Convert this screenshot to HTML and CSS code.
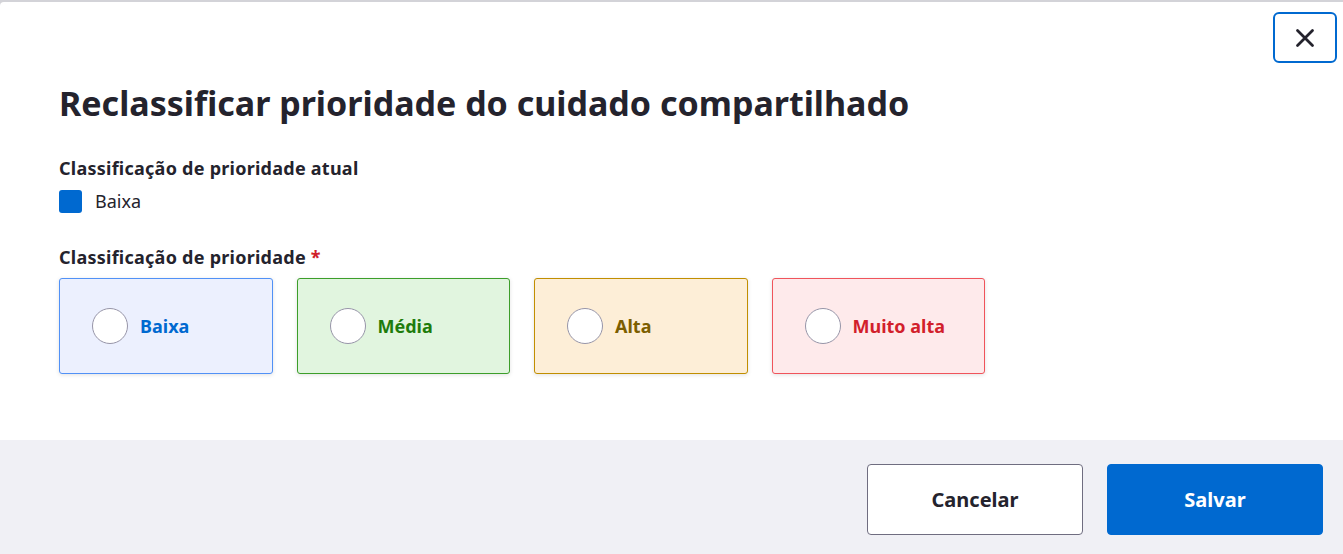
FILE: index.html
```html
<!DOCTYPE html>
<html lang="pt-BR">
<head>
<meta charset="utf-8">
<title>Reclassificar prioridade</title>
<link rel="stylesheet" href="styles.css">
</head>
<body>
<div class="modal">
  <div class="modal-body">
    <div class="close-row">
      <button class="close-btn" aria-label="Fechar">
        <svg width="20" height="20" viewBox="0 0 20 20"><path d="M2.5 2.5 L17.5 17.5 M17.5 2.5 L2.5 17.5" stroke="#24232d" stroke-width="2.8" stroke-linecap="round" fill="none"/></svg>
      </button>
    </div>
    <h1 class="title">Reclassificar prioridade do cuidado compartilhado</h1>
    <div class="label">Classificação de prioridade atual</div>
    <div class="current">
      <span class="swatch"></span>
      <span class="current-text">Baixa</span>
    </div>
    <div class="label label-req">Classificação de prioridade <span class="req">*</span></div>
    <div class="options">
      <label class="opt opt-baixa"><span class="radio"></span><span class="opt-text">Baixa</span></label>
      <label class="opt opt-media"><span class="radio"></span><span class="opt-text">Média</span></label>
      <label class="opt opt-alta"><span class="radio"></span><span class="opt-text">Alta</span></label>
      <label class="opt opt-muito"><span class="radio"></span><span class="opt-text">Muito alta</span></label>
    </div>
  </div>
  <div class="footer">
    <button class="btn btn-cancel">Cancelar</button>
    <button class="btn btn-save">Salvar</button>
  </div>
</div>
</body>
</html>
```

FILE: styles.css
```css
* { box-sizing: border-box; }
html, body { margin: 0; padding: 0; }
body {
  background: #d3d3d8;
  font-family: "Noto Sans", "Open Sans", sans-serif;
  color: #24232d;
  padding-top: 2px;
}
.modal {
  background: #ffffff;
  border-top-left-radius: 4px;
  height: 552px;
  display: flex;
  flex-direction: column;
}
.modal-body {
  flex: 1;
  padding: 10px 6px 0 59px;
}
.close-row {
  display: flex;
  justify-content: flex-end;
}
.close-btn {
  width: 64px;
  height: 51px;
  border: 2px solid #0069d0;
  border-radius: 6px;
  background: #fff;
  display: flex;
  align-items: center;
  justify-content: center;
  padding: 0;
}
.title {
  margin: 17px 0 0 0;
  font-size: 34px;
  font-weight: 700;
  line-height: 46px;
  letter-spacing: 0;
}
.label {
  margin-top: 30px;
  font-size: 18px;
  font-weight: 700;
  line-height: 24px;
  letter-spacing: 0.25px;
}
.current {
  display: flex;
  align-items: center;
  gap: 13px;
  margin-top: 9px;
  height: 24px;
}
.swatch {
  width: 23px;
  height: 23px;
  border-radius: 3px;
  background: #0069d0;
}
.current-text {
  font-size: 18px;
  line-height: 24px;
}
.label-req { margin-top: 32px; }
.req { color: #d0202a; }
.options {
  display: grid;
  grid-template-columns: repeat(4, 213.5px);
  gap: 24px;
  margin-top: 9px;
}
.opt {
  height: 96px;
  border: 1px solid;
  border-radius: 3px;
  display: flex;
  align-items: center;
  padding-left: 32px;
  gap: 12px;
  box-shadow: 0 1px 4px rgba(0,0,0,0.12);
}
.radio {
  width: 36px;
  height: 36px;
  border-radius: 50%;
  border: 1px solid #9795a8;
  background: #fff;
}
.opt-text {
  font-size: 18px;
  font-weight: 700;
}
.opt-baixa { background: #ecf0fe; border-color: #5191f6; color: #0069d0; }
.opt-media { background: #e1f5df; border-color: #3c9e2a; color: #1e7c0c; }
.opt-alta { background: #fdeed7; border-color: #c18e00; color: #7c5e00; }
.opt-muito { background: #feeaeb; border-color: #f0545b; color: #d21f2c; }
.footer {
  height: 114px;
  background: #f0f0f5;
  display: flex;
  justify-content: flex-end;
  align-items: flex-start;
  gap: 24px;
  padding: 24px 20px 0 0;
}
.btn {
  width: 216px;
  height: 71px;
  border-radius: 4px;
  font-family: inherit;
  font-size: 20px;
  font-weight: 700;
}
.btn-cancel {
  background: #fff;
  border: 1px solid #6f6d80;
  color: #24232d;
}
.btn-save {
  background: #0069d0;
  border: 1px solid #0069d0;
  color: #fff;
}
```
